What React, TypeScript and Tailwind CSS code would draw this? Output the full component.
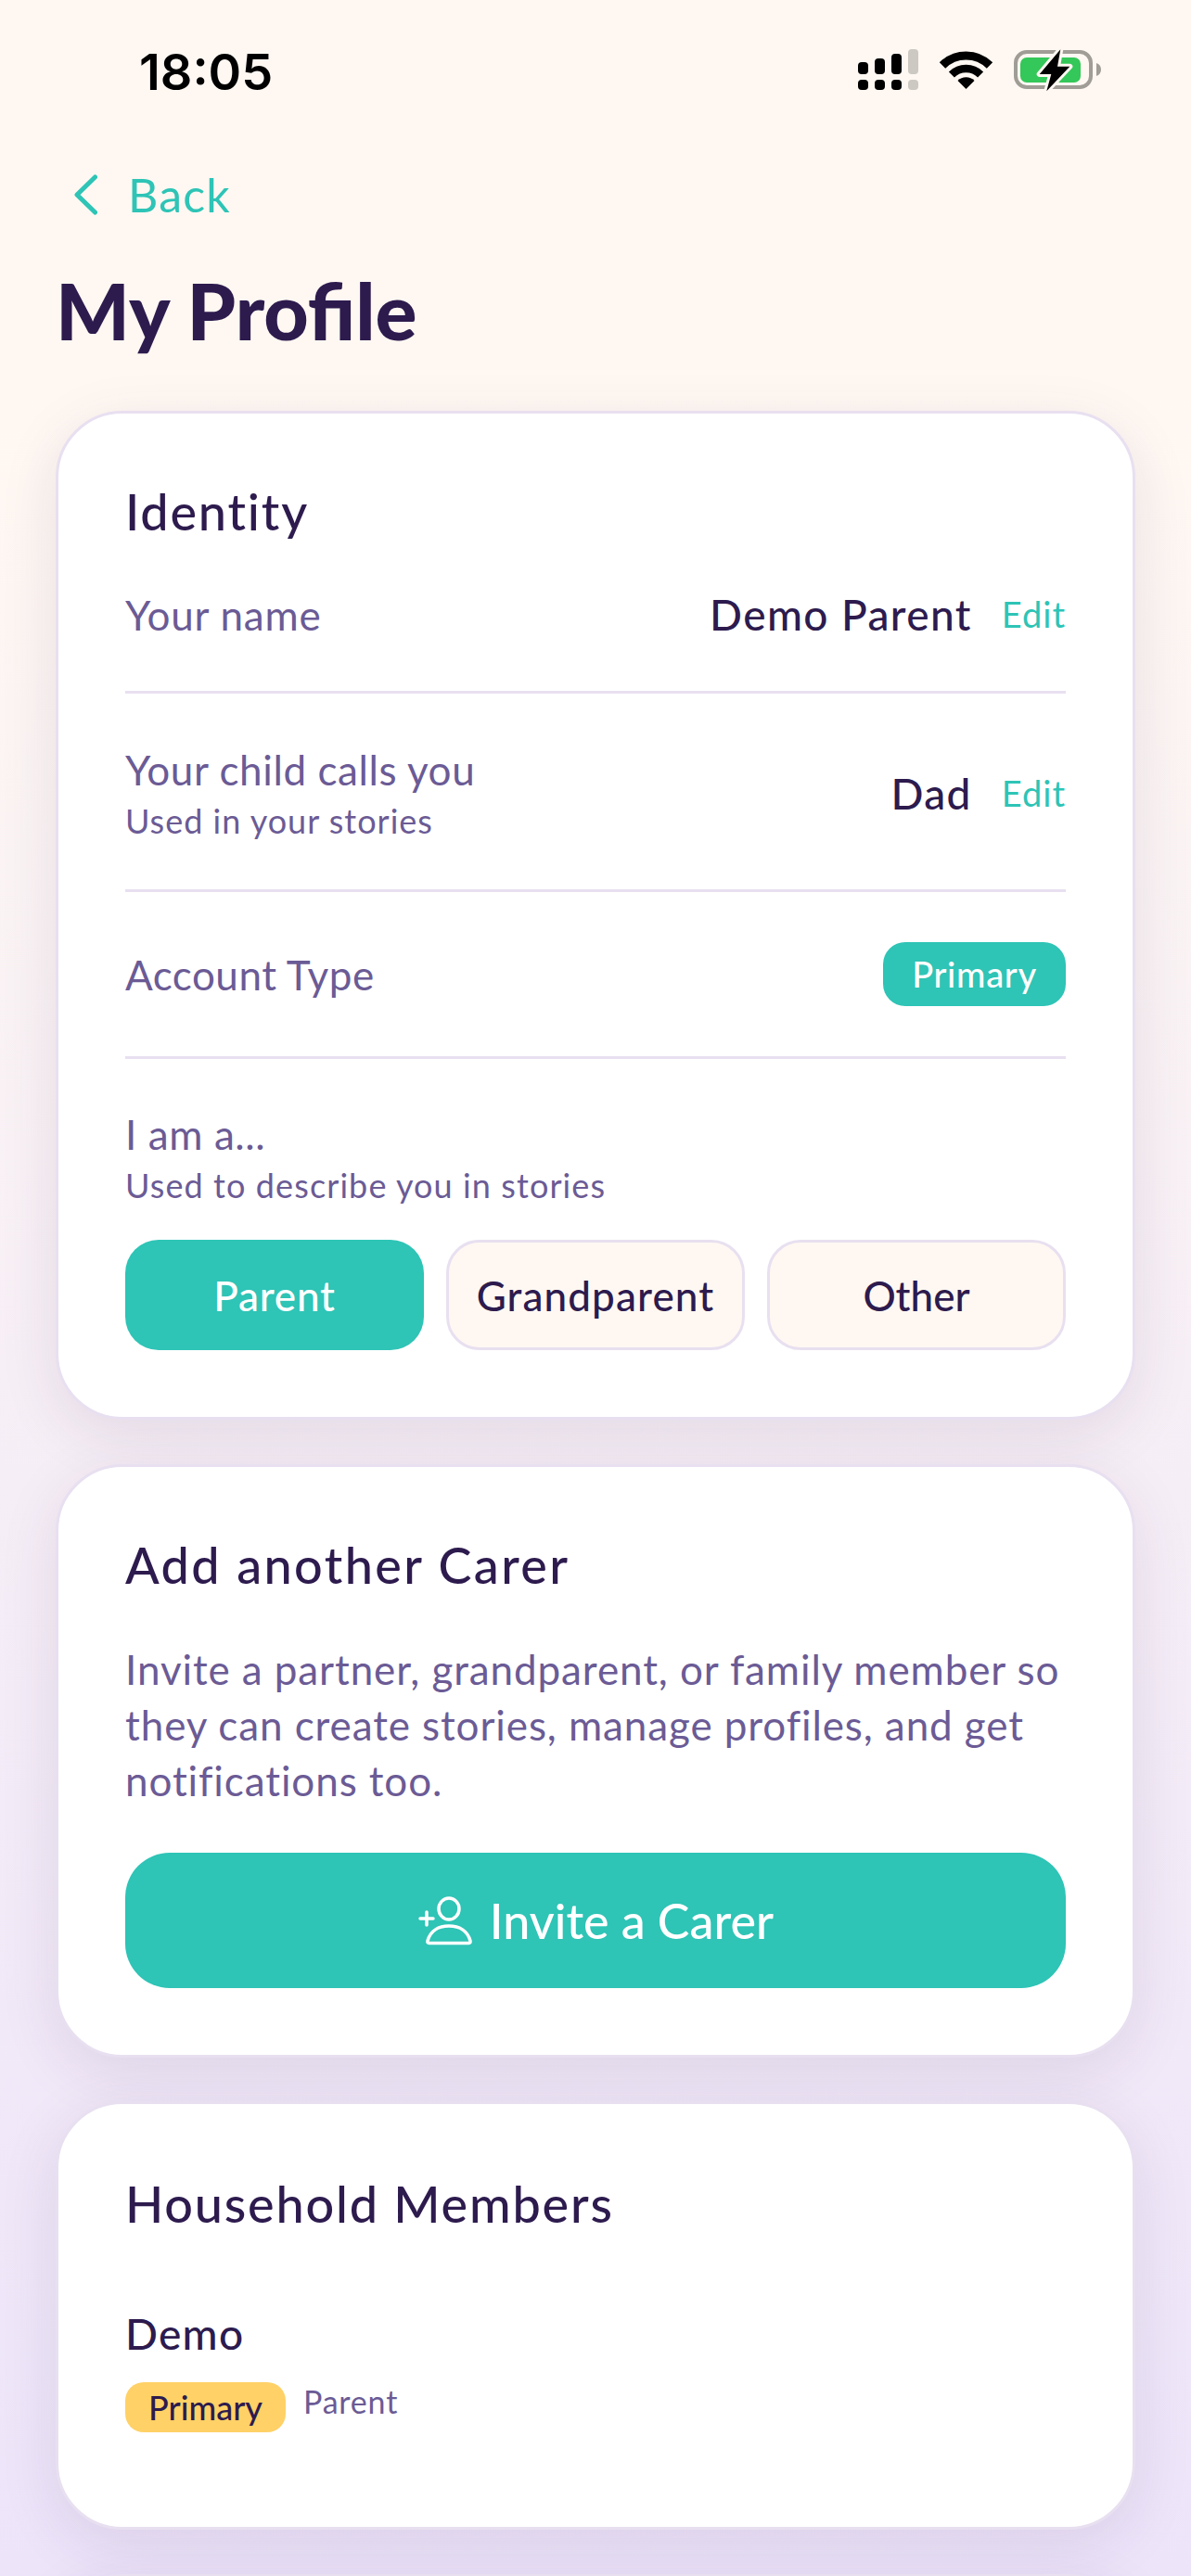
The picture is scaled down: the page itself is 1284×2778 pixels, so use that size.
const card = 'mx-[60px] rounded-[72px] border-[3px] border-[#E8E0F0] bg-white px-[72px] shadow-[0_16px_64px_rgba(45,27,78,0.1)]';
const title = "h-[56px] flex items-center text-[54px] font-medium leading-none tracking-[1.8px] text-[#2D1B4E]";

function StatusIcons() {
  return (
    <svg width="270" height="52" viewBox="0 0 270 52" fill="none">
      <g fill="#000">
        <rect x="5" y="17" width="11" height="13" rx="4" />
        <rect x="23" y="13" width="11" height="17" rx="4" />
        <rect x="41" y="8" width="11" height="22" rx="4" />
        <rect x="5" y="36" width="11" height="11" rx="4" />
        <rect x="23" y="36" width="11" height="11" rx="4" />
        <rect x="41" y="36" width="11" height="11" rx="4" />
      </g>
      <rect x="59" y="3" width="11" height="27" rx="4" fill="#CCC8C2" />
      <rect x="59" y="36" width="11" height="11" rx="4" fill="#CCC8C2" />
      <path d="M96 20.500A36 36 0 0 1 147 20.500" stroke="#000" strokeWidth="9" />
      <path d="M105.900 30.400A22 22 0 0 1 137.100 30.400" stroke="#000" strokeWidth="8.500" />
      <path d="M121.500 46L112.500 37A12.700 12.700 0 0 1 130.500 37Z" fill="#000" />
      <rect x="175" y="6" width="81" height="38" rx="12" stroke="#A09C96" strokeWidth="4" />
      <path d="M262 18c3 1 5 3.500 5 7s-2 6-5 7z" fill="#A09C96" />
      <rect x="180" y="12" width="65" height="27" rx="7" fill="#34C759" />
      <path
        d="M223.300 3.300L200.700 30H213.300L208.300 48.300L233.300 21.700H220Z"
        fill="#000"
        stroke="#FFF8F2"
        strokeWidth="6"
        strokeLinejoin="round"
        paintOrder="stroke"
      />
    </svg>
  );
}

function UserPlus() {
  return (
    <svg width="60" height="55" viewBox="0 0 60 55" fill="none" stroke="#fff" strokeWidth="3.500" strokeLinecap="round" strokeLinejoin="round">
      <ellipse cx="34" cy="14.500" rx="11" ry="11.500" />
      <path d="M12.500 51.500H55.500Q57.500 51.500 57 49C54 38 45 33 34 33C23 33 14 38 11 49Q10.500 51.500 12.500 51.500Z" />
      <path d="M3 25H17M10 18V32" />
    </svg>
  );
}

function Row({ label, value }: { label: string; value: string }) {
  return (
    <div className="h-[168px] flex items-center justify-between border-b-[3px] border-[#E8E0F0]">
      <span className="text-[44px] tracking-[0.8px] text-[#6B5B95]">{label}</span>
      <div className="flex items-center gap-[32px]">
        <span className="text-[46px] font-medium tracking-[1.4px] text-[#2D1B4E]">{value}</span>
        <span className="text-[38px] tracking-[1px] text-[#2EC4B6]">Edit</span>
      </div>
    </div>
  );
}

export default function App() {
  return (
    <div
      className="h-[2778px] overflow-hidden bg-gradient-to-b from-[#FFF8F2] from-15% to-[#EDE4FA]"
      style={{ fontFamily: 'Lato, "Noto Sans", sans-serif' }}
    >
      <div className="h-[102px] pt-[50px] pl-[150px] pr-[94px] flex items-start justify-between">
        <span className="mt-[2px] text-[54px] font-semibold leading-[52px] text-black" style={{ fontFamily: 'Inter, sans-serif' }}>18:05</span>
        <StatusIcons />
      </div>
      <div className="mt-[78px] pl-[80px] h-[60px] flex items-center gap-[33px]">
        <svg width="25" height="44" viewBox="0 0 25 44" fill="none" stroke="#2EC4B6" strokeWidth="5" strokeLinecap="round" strokeLinejoin="round">
          <path d="M22.500 3L3 22L22.500 41" />
        </svg>
        <span className="text-[50px] tracking-[1.2px] text-[#2EC4B6]">Back</span>
      </div>
      <h1 className="mt-[50px] ml-[60px] h-[90px] flex items-center text-[84px] font-black text-[#2D1B4E]">My Profile</h1>
      <div className="h-[63px]" />

      <div className={`${card} pt-[78px] pb-[72px]`}>
        <div className={title}>Identity</div>
        <Row label="Your name" value="Demo Parent" />
        <div className="pt-[52px] pb-[49px] flex items-center justify-between border-b-[3px] border-[#E8E0F0]">
          <div>
            <div className="h-[60px] flex items-center text-[44px] tracking-[0.6px] text-[#6B5B95]">Your child calls you</div>
            <div className="h-[50px] flex items-center text-[36px] tracking-[1px] text-[#6B5B95]">Used in your stories</div>
          </div>
          <div className="flex items-center gap-[32px]">
            <span className="text-[46px] font-medium tracking-[1.4px] text-[#2D1B4E]">Dad</span>
            <span className="text-[38px] tracking-[1px] text-[#2EC4B6]">Edit</span>
          </div>
        </div>
        <div className="h-[180px] flex items-center justify-between border-b-[3px] border-[#E8E0F0]">
          <span className="text-[44px] tracking-[0.5px] text-[#6B5B95]">Account Type</span>
          <span className="h-[69px] w-[197px] rounded-[24px] bg-[#2EC4B6] flex items-center justify-center text-[38px] font-medium tracking-[0.7px] text-white">Primary</span>
        </div>
        <div className="pt-[51px]">
          <div className="h-[60px] flex items-center text-[44px] tracking-[0.6px] text-[#6B5B95]">I am a...</div>
          <div className="h-[50px] flex items-center text-[36px] tracking-[1.1px] text-[#6B5B95]">Used to describe you in stories</div>
          <div className="mt-[34px] grid grid-cols-3 gap-[24px]">
            <div className="h-[119px] rounded-[36px] bg-[#2EC4B6] flex items-center justify-center text-[44px] font-medium tracking-[0.8px] text-white">Parent</div>
            <div className="h-[119px] rounded-[36px] border-[3px] border-[#E8E0F0] bg-[#FFF8F2] flex items-center justify-center text-[44px] font-medium tracking-[1.1px] text-[#2D1B4E]">Grandparent</div>
            <div className="h-[119px] rounded-[36px] border-[3px] border-[#E8E0F0] bg-[#FFF8F2] flex items-center justify-center text-[44px] font-medium text-[#2D1B4E]">Other</div>
          </div>
        </div>
      </div>

      <div className={`${card} mt-[48px] pt-[78px] pb-[72px]`}>
        <div className={`${title} tracking-[2.4px]`}>Add another Carer</div>
        <p className="mt-[54px] text-[44px] leading-[60px] tracking-[0.9px] text-[#6B5B95]">
          Invite a partner, grandparent, or family member so they can create stories, manage profiles, and get notifications too.
        </p>
        <div className="mt-[48px] h-[146px] rounded-[48px] bg-[#2EC4B6] flex items-center justify-center gap-[18px] text-[52px] font-medium text-white">
          <UserPlus />
          Invite a Carer
        </div>
      </div>

      <div className={`${card} mt-[47px] pt-[80px] pb-[102px]`}>
        <div className={title}>Household Members</div>
        <div className="mt-[83px] h-[56px] flex items-center text-[46px] font-medium tracking-[1.3px] text-[#2D1B4E]">Demo</div>
        <div className="mt-[25px] flex items-start gap-[19px]">
          <span className="h-[54px] w-[173px] rounded-[20px] bg-[#FFD166] flex items-center justify-center text-[36px] font-medium text-[#2D1B4E]">Primary</span>
          <span className="text-[34px] leading-[42px] tracking-[0.8px] text-[#6B5B95]">Parent</span>
        </div>
      </div>

      <div className={`${card} mt-[48px] h-[200px]`} />
    </div>
  );
}
